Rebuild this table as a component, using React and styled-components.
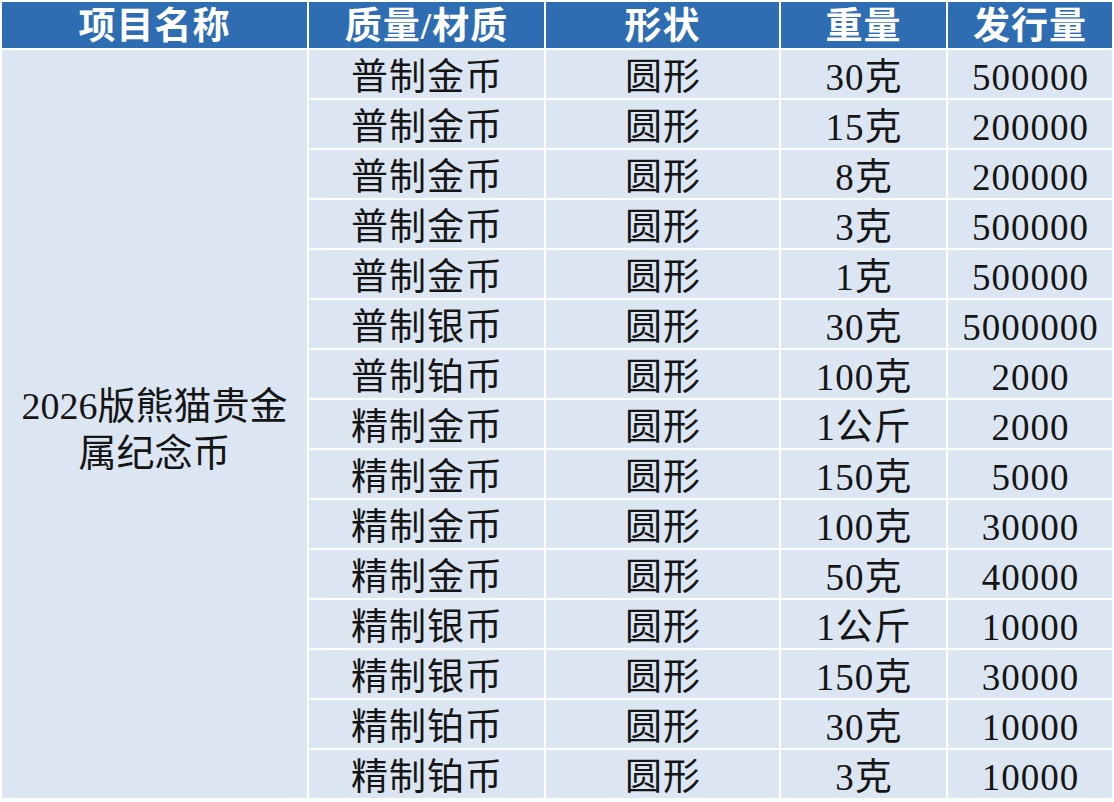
import React from "react";
import styled, { createGlobalStyle } from "styled-components";

const GlobalStyle = createGlobalStyle`
  html, body {
    margin: 0;
    padding: 0;
    background: #ffffff;
  }
  body {
    font-family: "Liberation Serif", "Noto Sans CJK SC", serif;
  }
`;

const rows = [
  ["普制金币", "圆形", "30克", "500000"],
  ["普制金币", "圆形", "15克", "200000"],
  ["普制金币", "圆形", "8克", "200000"],
  ["普制金币", "圆形", "3克", "500000"],
  ["普制金币", "圆形", "1克", "500000"],
  ["普制银币", "圆形", "30克", "5000000"],
  ["普制铂币", "圆形", "100克", "2000"],
  ["精制金币", "圆形", "1公斤", "2000"],
  ["精制金币", "圆形", "150克", "5000"],
  ["精制金币", "圆形", "100克", "30000"],
  ["精制金币", "圆形", "50克", "40000"],
  ["精制银币", "圆形", "1公斤", "10000"],
  ["精制银币", "圆形", "150克", "30000"],
  ["精制铂币", "圆形", "30克", "10000"],
  ["精制铂币", "圆形", "3克", "10000"],
];

const headers = ["项目名称", "质量/材质", "形状", "重量", "发行量"];

const Table = styled.div`
  display: grid;
  grid-template-columns: 305px 235px 233px 165px 164px;
  grid-template-rows: 46px repeat(15, 48px);
  gap: 2px;
  padding: 2px;
  width: max-content;
  background: #ffffff;
`;

const HeadCell = styled.div`
  display: flex;
  align-items: center;
  justify-content: center;
  background: #2f6db3;
  color: #ffffff;
  font-family: "Liberation Serif", "Noto Sans CJK SC", serif;
  font-weight: 700;
  font-size: 37px;
  letter-spacing: 1px;
  line-height: 1;
  padding-top: 2px;
`;

const Cell = styled.div`
  display: flex;
  align-items: center;
  justify-content: center;
  background: #dce6f2;
  color: #151515;
  font-size: 37px;
  letter-spacing: 1px;
  line-height: 1;
  padding-top: 6px;
  padding-left: 1px;
  white-space: nowrap;
`;

const NameCell = styled.div`
  grid-row: 2 / span 15;
  grid-column: 1;
  display: flex;
  align-items: center;
  justify-content: center;
  background: #dce6f2;
  color: #151515;
  font-size: 38px;
  line-height: 47px;
  text-align: center;
  padding: 12px 14px 0;
`;

export default function App() {
  return (
    <>
      <GlobalStyle />
      <Table>
        {headers.map((h) => (
          <HeadCell key={h}>{h}</HeadCell>
        ))}
        <NameCell>2026版熊猫贵金属纪念币</NameCell>
        {rows.map((r, i) =>
          r.map((v, j) => <Cell key={i + "-" + j}>{v}</Cell>)
        )}
      </Table>
    </>
  );
}
